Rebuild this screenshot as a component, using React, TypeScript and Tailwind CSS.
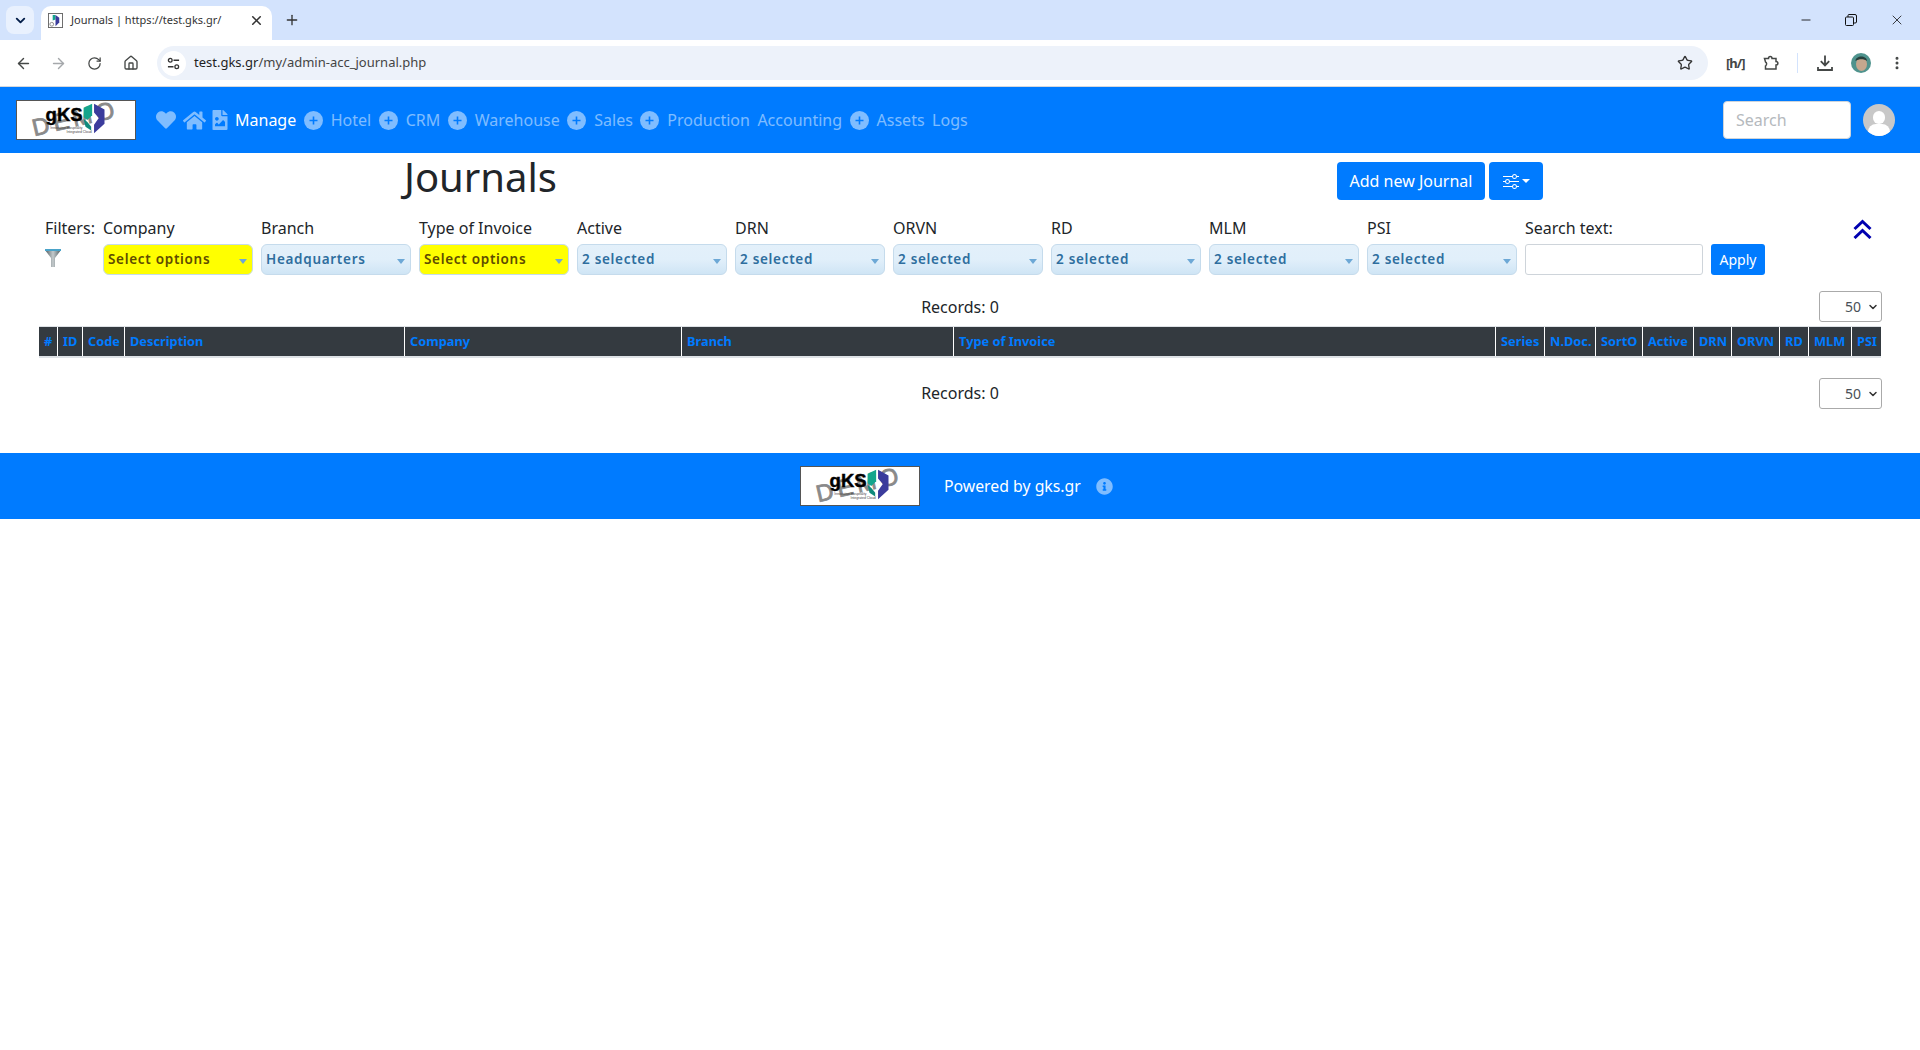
import { ArrowLeft, ArrowRight, ChevronDown, EllipsisVertical, Home, Minus, Plus, RotateCw, Star, X } from 'lucide-react';
import { BsSliders } from 'react-icons/bs';
import { FaFileImage, FaHeart, FaHome, FaInfoCircle } from 'react-icons/fa';

const filters = [
  { label: 'Company', value: 'Select options', hot: true },
  { label: 'Branch', value: 'Headquarters' },
  { label: 'Type of Invoice', value: 'Select options', hot: true },
  { label: 'Active', value: '2 selected' },
  { label: 'DRN', value: '2 selected' },
  { label: 'ORVN', value: '2 selected' },
  { label: 'RD', value: '2 selected' },
  { label: 'MLM', value: '2 selected' },
  { label: 'PSI', value: '2 selected' },
];

const columns = [
  { name: '#', width: 'w-[19px]' },
  { name: 'ID', width: 'w-[25px]' },
  { name: 'Code', width: 'w-[42px]' },
  { name: 'Description', width: 'w-[280px]' },
  { name: 'Company', width: 'w-[277px]' },
  { name: 'Branch', width: 'w-[272px]' },
  { name: 'Type of Invoice', width: 'w-[542px]' },
  { name: 'Series', width: 'w-[49px]' },
  { name: 'N.Doc.', width: 'w-[51px]' },
  { name: 'SortO', width: 'w-[47px]' },
  { name: 'Active', width: 'w-[51px]' },
  { name: 'DRN', width: 'w-[38px]' },
  { name: 'ORVN', width: 'w-[48px]' },
  { name: 'RD', width: 'w-[29px]' },
  { name: 'MLM', width: 'w-[43px]' },
  { name: 'PSI', width: 'w-[29px]' },
];

function Logo() {
  return (
    <div className="w-[120px] h-[40px] bg-white border border-[#555] shrink-0">
      <svg viewBox="0 0 120 40" className="w-full h-full overflow-visible">
        {/* watermark letters */}
        <text x="16" y="37" fontSize="25" fill="#8a8a8a" stroke="#8a8a8a" strokeWidth="0.9" textLength="88" transform="rotate(-13 16 37)" fontFamily="Liberation Sans, sans-serif">DEMO</text>
        <path d="M68 7 L77 3 L77 15 L72 20 L68 17 Z" fill="#14a58c" />
        <path d="M68 19 L72 22 L76 27 L76 31 L70 27 Z" fill="#0f8a7c" />
        <path d="M79 3 L90 9 L90 24 L79 34 L79 25 L84 18 L79 12 Z" fill="#3b3c9c" />
        <text x="28" y="21" fontSize="19" fontWeight="700" fill="#000" stroke="#000" strokeWidth="0.4" fontFamily="Liberation Sans, sans-serif" textLength="39" lengthAdjust="spacingAndGlyphs">gKS</text>
        <text x="33" y="29" fontSize="3.6" fill="#444" fontFamily="Liberation Sans, sans-serif">Innovative Hospitality</text>
        <text x="50" y="34" fontSize="3.6" fill="#444" fontFamily="Liberation Sans, sans-serif">Integrated Cloud</text>
      </svg>
    </div>
  );
}

function Favicon() {
  return (
    <svg viewBox="0 0 16 16" className="w-[15px] h-[15px] shrink-0">
      <rect x="0.5" y="0.5" width="15" height="15" fill="#fff" stroke="#666" />
      <path d="M5 2 L8 2 L8 7 L5 8 Z" fill="#14a58c" />
      <path d="M8 2 L12 5 L12 10 L8 14 Z" fill="#3b3c9c" />
      <circle cx="4" cy="12" r="2" fill="none" stroke="#888" />
    </svg>
  );
}

function PlusBadge() {
  return (
    <svg viewBox="0 0 19 19" className="w-[19px] h-[19px] mr-[8px] shrink-0">
      <circle cx="9.5" cy="9.5" r="9.5" fill="#fff" fillOpacity="0.5" />
      <path d="M9.5 5.5 V13.5 M5.5 9.5 H13.5" stroke="#007bff" strokeWidth="1.6" />
    </svg>
  );
}

function NavLink({ label, plus, active }: { label: string; plus?: boolean; active?: boolean }) {
  return (
    <div className="flex items-center">
      {plus && <PlusBadge />}
      <span className={active ? 'text-white' : 'text-white/50'}>{label}</span>
    </div>
  );
}

function FilterSelect({ value, hot }: { value: string; hot?: boolean }) {
  return (
    <div
      className={
        hot
          ? 'h-[31px] flex items-center justify-between pl-[4px] pr-[5px] rounded-[6px] border border-[#c5dbec] bg-[#ffff00] text-[#5e4c00]'
          : 'h-[31px] flex items-center justify-between pl-[4px] pr-[5px] rounded-[6px] border border-[#c5dbec] bg-gradient-to-b from-[#e3f0fa] via-[#e1effa] to-[#cfe5f5] text-[#2e6e9e]'
      }
    >
      <span className="text-[13.5px] font-semibold tracking-[0.7px] leading-none">{value}</span>
      <span className="mt-[3px] w-0 h-0 border-x-[4px] border-x-transparent border-t-[5px] border-t-[#6da8d6]" />
    </div>
  );
}

function PageSize() {
  return (
    <div className="w-[63px] h-[31px] border border-[#aaa] rounded-[3px] flex items-center justify-end pr-[2px] gap-[6px] text-[#495057] text-[14px]">
      <span>50</span>
      <ChevronDown size={12} strokeWidth={3} className="text-[#333]" />
    </div>
  );
}

export default function App() {
  return (
    <div className="min-h-[1050px] bg-white font-['Noto_Sans',sans-serif] text-[16px] text-[#212529]">
      {/* browser tab strip */}
      <div className="h-[40px] bg-[#d3e3fd] flex items-end pl-[6px]">
        <div className="w-[28px] h-[28px] mb-[6px] rounded-[8px] bg-[#e9f1fe] flex items-center justify-center">
          <ChevronDown size={15} strokeWidth={3} className="text-[#041e49]" />
        </div>
        <div className="w-[231px] h-[34px] ml-[7px] bg-white rounded-t-[10px] flex items-center pl-[7px] pr-[8px] pb-[6px]">
          <Favicon />
          <span className="ml-[8px] flex-1 text-[11px] text-[#333]">Journals | https://test.gks.gr/</span>
          <X size={15} strokeWidth={2.5} className="text-[#333]" />
        </div>
        <div className="ml-[12px] mb-[6px] h-[28px] flex items-center">
          <Plus size={16} className="text-[#333]" />
        </div>
        <div className="ml-auto h-full flex items-center gap-[32px] pr-[15px] pb-[1px]">
          <Minus size={14} className="text-[#111]" strokeWidth={1.5} />
          <svg viewBox="0 0 12 12" className="w-[12px] h-[12px] text-[#111]" fill="none" stroke="currentColor">
            <rect x="0.5" y="3" width="8" height="8.5" rx="1" />
            <path d="M3 3 V1.5 Q3 0.5 4 0.5 H10 Q11.5 0.5 11.5 2 V8 Q11.5 9 10 9 H8.5" />
          </svg>
          <X size={16} className="text-[#111]" strokeWidth={1.2} />
        </div>
      </div>

      {/* browser toolbar */}
      <div className="h-[47px] bg-white border-b border-[#d5d8dd] rounded-tr-[8px] flex items-center pl-[15px] pr-[13px] text-[#444746]">
        <ArrowLeft size={17} strokeWidth={2} />
        <ArrowRight size={17} strokeWidth={2} className="ml-[18px] text-[#a5a8ab]" />
        <RotateCw size={15} strokeWidth={2} className="ml-[20px]" />
        <Home size={16} strokeWidth={2} className="ml-[21px]" />
        <div className="ml-[18px] w-[1551px] h-[34px] rounded-full bg-[#edf2fa] flex items-center pl-[4px] pr-[15px] shrink-0">
          <div className="w-[25px] h-[25px] rounded-full bg-white flex items-center justify-center">
            <svg viewBox="0 0 14 14" className="w-[13px] h-[13px]" fill="none" stroke="#333" strokeWidth="1.4">
              <circle cx="3.5" cy="3.5" r="2" />
              <path d="M7 3.5 H13 M1 10.5 H7" />
              <circle cx="10.5" cy="10.5" r="2" />
            </svg>
          </div>
          <span className="ml-[8px] text-[13px] text-[#1f1f1f]">
            test.gks.gr<span className="text-[#444]">/my/admin-acc_journal.php</span>
          </span>
          <Star size={16} strokeWidth={2} className="ml-auto text-[#333]" />
        </div>
        <span className="ml-[18px] w-[17px] text-[13px] font-bold leading-none tracking-[-1px] whitespace-nowrap">[h/]</span>
        <svg viewBox="0 0 16 16" className="ml-[20px] w-[16px] h-[16px]" fill="none" stroke="currentColor" strokeWidth="1.5">
          <path d="M1.5 3.5 H5.5 C5.5 0.8 9 0.8 9 3.5 H13 V6.5 C15.5 6.5 15.5 10 13 10 V14 H2.5 V11 C4 10 4 7.5 2.5 7 Z" />
        </svg>
        <div className="ml-[18px] w-[1px] h-[20px] bg-[#d3e3fd]" />
        <svg viewBox="0 0 16 16" className="ml-[19px] w-[16px] h-[16px]" fill="none" stroke="currentColor" strokeWidth="1.8">
          <path d="M8 0.5 V10 M3.8 6.2 L8 10.4 L12.2 6.2 M1 12 V15 H15 V12" />
        </svg>
        <svg viewBox="0 0 20 20" className="ml-[18px] w-[20px] h-[20px]">
          <circle cx="10" cy="10" r="10" fill="#4f938d" />
          <ellipse cx="10.5" cy="11" rx="5.5" ry="7" fill="#c4a78e" />
          <path d="M4.5 8 C4.5 2 16 2 16 8 C13 5.5 8 5.5 4.5 8 Z" fill="#27403d" />
        </svg>
        <EllipsisVertical size={16} strokeWidth={2.5} className="ml-[18px]" />
      </div>

      {/* navbar */}
      <div className="h-[66px] bg-[#007bff] flex items-center pl-[16px] pr-[25px]">
        <Logo />
        <div className="ml-[20px] flex items-center text-white/50">
          <FaHeart className="text-[20px]" />
          <FaHome className="ml-[7px] text-[23px]" />
          <FaFileImage className="ml-[4px] text-[20px]" />
        </div>
        <div className="ml-[5px] flex items-center gap-[7.5px]">
          <NavLink label="Manage" active />
          <NavLink label="Hotel" plus />
          <NavLink label="CRM" plus />
          <NavLink label="Warehouse" plus />
          <NavLink label="Sales" plus />
          <NavLink label="Production" plus />
          <NavLink label="Accounting" />
          <NavLink label="Assets" plus />
          <NavLink label="Logs" />
        </div>
        <div className="ml-auto w-[128px] h-[38px] bg-white rounded-[4px] border border-[#ced4da] flex items-center pl-[12px] text-[#b5b9bd]">Search</div>
        <div className="ml-[12px] w-[32px] h-[32px] rounded-full bg-[#c8c8c8] overflow-hidden relative">
          <div className="absolute left-[10px] top-[7px] w-[12px] h-[13px] rounded-full bg-white" />
          <div className="absolute left-[5px] top-[20px] w-[22px] h-[16px] rounded-full bg-white" />
        </div>
      </div>

      {/* page title */}
      <div className="h-[47px] flex items-start">
        <h1 className="ml-[404px] text-[40px] leading-[48px] text-[#212529]">Journals</h1>
        <div className="ml-[780px] mt-[9px] flex gap-[4px]">
          <button className="h-[38px] w-[148px] bg-[#007bff] text-white rounded-[4px]">Add new Journal</button>
          <button className="h-[38px] w-[54px] bg-[#007bff] text-white rounded-[4px] flex items-center justify-center gap-[3px]">
            <BsSliders className="text-[16px]" />
            <span className="w-0 h-0 border-x-[4px] border-x-transparent border-t-[4px] border-t-white" />
          </button>
        </div>
      </div>

      {/* filters */}
      <div className="flex mt-[16px] pl-[45px]">
        <div className="w-[58px]">
          <div className="h-[24px] leading-[24px]">Filters:</div>
          <svg viewBox="0 0 16 18" className="w-[16px] h-[18px] mt-[9px]">
            <defs>
              <linearGradient id="funnel" x1="0" x2="1" y1="0" y2="0">
                <stop offset="0" stopColor="#4d5a5f" />
                <stop offset="0.5" stopColor="#c4cacc" />
                <stop offset="1" stopColor="#4d5a5f" />
              </linearGradient>
            </defs>
            <path d="M0 1 H16 L10 9 V18 H6 V9 Z" fill="url(#funnel)" />
            <rect x="0" y="0" width="16" height="2" fill="#4aa3c9" />
          </svg>
        </div>
        <div className="flex gap-[8px]">
          {filters.map((f) => (
            <div key={f.label + f.value} className="w-[150px]">
              <div className="h-[24px] leading-[24px] mb-[4px]">{f.label}</div>
              <FilterSelect value={f.value} hot={f.hot} />
            </div>
          ))}
          <div className="w-[178px]">
            <div className="h-[24px] leading-[24px] mb-[4px]">Search text:</div>
            <div className="h-[31px] border border-[#ced4da] rounded-[3px] bg-white" />
          </div>
          <div className="self-end h-[31px] w-[54px] bg-[#007bff] text-white rounded-[3px] text-[14px] flex items-center justify-center">Apply</div>
        </div>
        <svg viewBox="0 0 19 20" className="ml-[88px] mt-[3px] w-[19px] h-[20px]" fill="none" stroke="#0000b0" strokeWidth="3">
          <path d="M1.5 10 L9.5 2.5 L17.5 10 M1.5 19 L9.5 11.5 L17.5 19" />
        </svg>
      </div>

      {/* records top */}
      <div className="mt-[16px] pr-[38px] h-[31px] relative flex items-center justify-end">
        <span className="absolute left-0 right-0 text-center">Records: 0</span>
        <PageSize />
      </div>

      {/* table header */}
      <div className="mt-[4px] ml-[39px] w-[1842px] flex h-[32px] bg-[#343a40] border-t border-[#dee2e6] border-b-2 border-b-[#dee2e6] text-[12.8px] font-bold text-[#007bff]">
        {columns.map((c, i) => (
          <div key={c.name} className={`${c.width} shrink-0 pl-[5px] flex items-center whitespace-nowrap ${i < columns.length - 1 ? 'border-r border-white' : ''}`}>
            {c.name}
          </div>
        ))}
      </div>

      {/* records bottom */}
      <div className="mt-[20px] pr-[38px] h-[31px] relative flex items-center justify-end">
        <span className="absolute left-0 right-0 text-center mt-[-2px]">Records: 0</span>
        <PageSize />
      </div>

      {/* footer */}
      <div className="mt-[44px] h-[66px] bg-[#007bff] flex items-center text-white">
        <div className="ml-[800px]">
          <Logo />
        </div>
        <span className="ml-[24px] text-[15.8px] mt-[1px]">Powered by gks.gr</span>
        <FaInfoCircle className="ml-[15px] text-[17px] text-white/50" />
      </div>
    </div>
  );
}
